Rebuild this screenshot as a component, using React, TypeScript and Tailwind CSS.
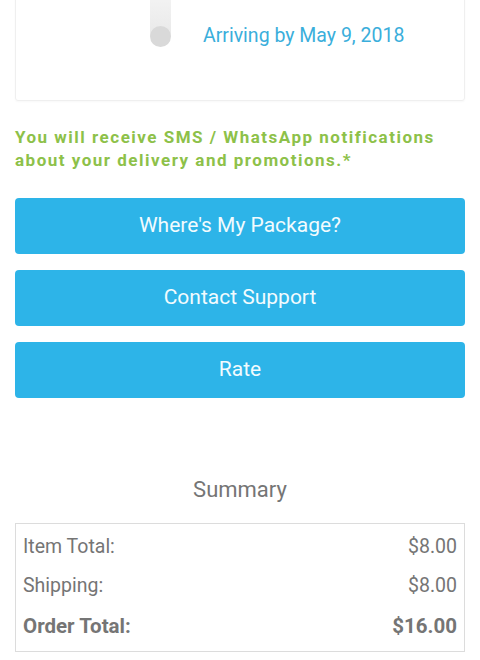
import React from 'react';

const rows = [
  { label: 'Item Total:', value: '$8.00' },
  { label: 'Shipping:', value: '$8.00' },
];

const buttons = ["Where's My Package?", 'Contact Support', 'Rate'];

export default function App() {
  return (
    <div className="w-[480px] h-[660px] overflow-hidden bg-white px-[15px] font-['Roboto',sans-serif]">
      {/* Delivery card (top cut off) */}
      <div className="-mt-[20px] h-[121px] w-[450px] rounded-[3px] border border-[#efefef] shadow-[0_1px_2px_rgba(0,0,0,0.03)] flex">
        <div className="ml-[134px] w-[21px] flex flex-col">
          <div className="h-[55px] w-[21px] bg-gradient-to-b from-[#f7f7f7] to-[#e9e9e9]" />
          <div className="-mt-[10px] h-[21px] w-[21px] rounded-full bg-[#d9d9d9]" />
        </div>
        <div className="ml-[32px] mt-[41px] text-[19.5px] leading-[28px] text-[#3aaedb]">
          Arriving by May 9, 2018
        </div>
      </div>

      <p className="mt-[25px] text-[17px] leading-[23px] font-bold tracking-[1.5px] text-[#8dc149]">
        You will receive SMS / WhatsApp notifications about your delivery and promotions.*
      </p>

      <div className="mt-[26px] flex flex-col gap-[16px]">
        {buttons.map(b => (
          <button
            key={b}
            className="h-[56px] w-full rounded-[4px] bg-[#2db4e8] text-[21px] text-[#f2fbfe]"
          >
            {b}
          </button>
        ))}
      </div>

      <h2 className="mt-[77px] text-center text-[22px] leading-[30px] text-[#757575]">Summary</h2>

      <div className="mt-[18px] border border-[#dcdcdc] px-[7px] pt-[3px] pb-[4px] text-[19.5px] text-[#757575]">
        {rows.map(r => (
          <div key={r.label} className="flex justify-between h-[39px] items-center">
            <span>{r.label}</span>
            <span>{r.value}</span>
          </div>
        ))}
        <div className="flex justify-between h-[42px] items-center font-bold text-[20.5px]">
          <span>Order Total:</span>
          <span>$16.00</span>
        </div>
      </div>
    </div>
  );
}
